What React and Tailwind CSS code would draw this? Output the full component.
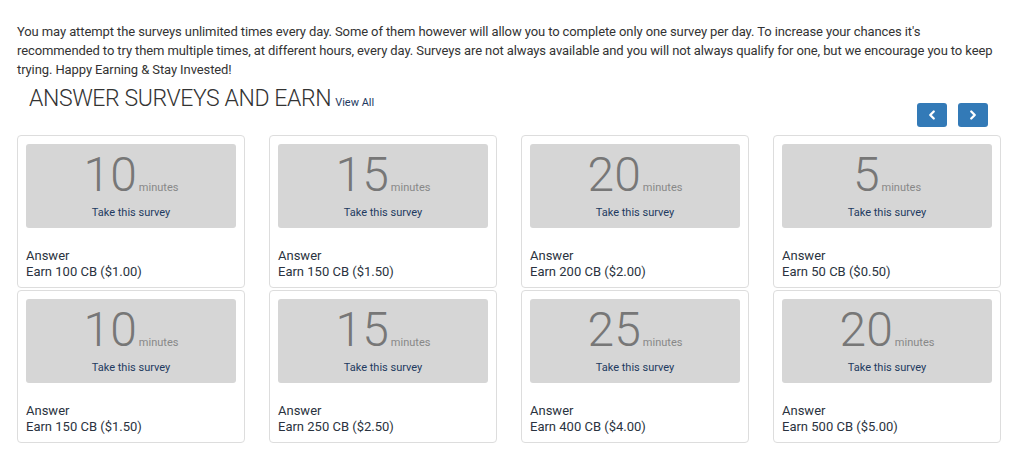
import { ChevronLeft, ChevronRight } from 'lucide-react';

const surveys = [
  { minutes: 10, cb: 100, usd: '1.00' },
  { minutes: 15, cb: 150, usd: '1.50' },
  { minutes: 20, cb: 200, usd: '2.00' },
  { minutes: 5, cb: 50, usd: '0.50' },
  { minutes: 10, cb: 150, usd: '1.50' },
  { minutes: 15, cb: 250, usd: '2.50' },
  { minutes: 25, cb: 400, usd: '4.00' },
  { minutes: 20, cb: 500, usd: '5.00' },
];

function SurveyCard({ survey }) {
  return (
    <div className="border border-[#dddddd] rounded-[4px] bg-white px-[8px] pt-[8px] pb-[7px]">
      <div className="bg-[#d6d6d6] rounded-[3px] h-[84px] pt-[7px] flex flex-col items-center">
        <div className="flex items-baseline leading-none">
          <span className="text-[48px] font-light text-[#777777] leading-[48px]">{survey.minutes}</span>
          <span className="text-[11px] text-[#888888] ml-[2px]">minutes</span>
        </div>
        <a href="#" className="mt-[6px] text-[11px] leading-[16px] text-[#1e3a5f]">
          Take this survey
        </a>
      </div>
      <div className="mt-[20px] text-[13px] leading-[16px] text-[#2a3340]">
        <div>Answer</div>
        <div>
          Earn {survey.cb} CB (${survey.usd})
        </div>
      </div>
    </div>
  );
}

export default function App() {
  return (
    <div className="min-h-screen bg-white font-['Roboto','Liberation_Sans',sans-serif] text-[#333333]">
      <div className="px-[17px] pt-[22px]">
        <p className="text-[13px] leading-[19px] tracking-[-0.1px]">
          You may attempt the surveys unlimited times every day. Some of them however will allow you to complete only one survey per day. To increase your chances it's recommended to try them multiple times, at different hours, every day. Surveys are not always available and you will not always qualify for one, but we encourage you to keep trying. Happy Earning &amp; Stay Invested!
        </p>

        <div className="flex items-start justify-between">
          <h2 className="pl-[12px] mt-[7px] text-[23px] font-light leading-[26px] tracking-[-0.4px] text-[#333333]">
            ANSWER SURVEYS AND EARN
            <a href="#" className="ml-[4px] text-[11px] font-normal tracking-normal text-[#1e3a5f]">
              View All
            </a>
          </h2>
          <div className="flex gap-[11px] mt-[24px] mr-[12px]">
            <button className="w-[30px] h-[24px] rounded-[3px] bg-[#337ab7] flex items-center justify-center text-white">
              <ChevronLeft size={14} strokeWidth={4} />
            </button>
            <button className="w-[30px] h-[24px] rounded-[3px] bg-[#337ab7] flex items-center justify-center text-white">
              <ChevronRight size={14} strokeWidth={4} />
            </button>
          </div>
        </div>

        <div className="grid grid-cols-[repeat(4,228px)] gap-x-[24px] gap-y-[2px] mt-[8px]">
          {surveys.map((s, i) => (
            <SurveyCard key={i} survey={s} />
          ))}
        </div>
      </div>
    </div>
  );
}
